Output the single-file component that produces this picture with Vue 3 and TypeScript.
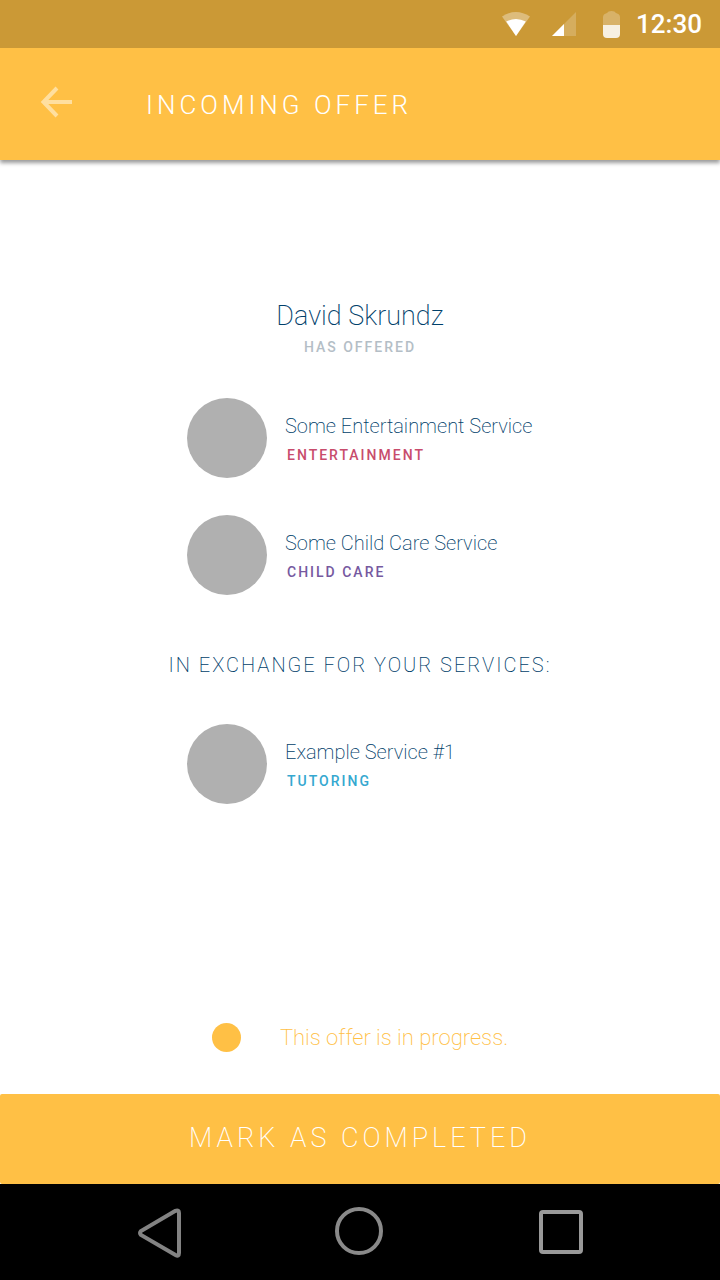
<script setup lang="ts">
interface Service {
  name: string
  category: string
  tone: string
}

const offered: Service[] = [
  { name: 'Some Entertainment Service', category: 'ENTERTAINMENT', tone: 'entertainment' },
  { name: 'Some Child Care Service', category: 'CHILD CARE', tone: 'child-care' },
]

const requested: Service[] = [
  { name: 'Example Service #1', category: 'TUTORING', tone: 'tutoring' },
]
</script>

<template>
  <div class="screen">
    <div class="status-bar">
      <svg class="wifi" width="28" height="24" viewBox="0 0 28 24" aria-hidden="true">
        <path d="M0 4.5Q14-4.5 28 4.5L14 24Z" fill="#fff" fill-opacity=".35" />
        <path d="M4.2 9.500Q14 4.500 23.8 9.500L14 24Z" fill="#fff" />
      </svg>
      <svg class="signal" width="24" height="24" viewBox="0 0 24 24" aria-hidden="true">
        <path d="M24 0V24H0Z" fill="#fff" fill-opacity=".2" />
        <path d="M12 12V24H0Z" fill="#fff" />
      </svg>
      <svg class="battery" width="17" height="27" viewBox="0 0 17 27" aria-hidden="true">
        <path d="M0 14V6Q0 3 4 2Q5 0 8.500 0T13 2Q17 3 17 6V14Z" fill="#fff" fill-opacity=".25" />
        <path d="M0 14H17V23Q17 27 13 27H4Q0 27 0 23Z" fill="#fff" fill-opacity=".85" />
      </svg>
      <time class="clock">12:30</time>
    </div>

    <header class="app-bar">
      <button class="back" type="button" aria-label="Back">
        <svg width="32" height="32" viewBox="0 0 32 32" aria-hidden="true">
          <path d="M17 2L3.500 16L17 30M3.500 16H32" />
        </svg>
      </button>
      <h1>INCOMING OFFER</h1>
    </header>

    <main>
      <h2 class="person">David Skrundz</h2>
      <p class="caption">HAS OFFERED</p>

      <ul class="services">
        <li v-for="service in offered" :key="service.name">
          <span class="avatar"></span>
          <div class="details">
            <span class="name">{{ service.name }}</span>
            <span class="category" :class="service.tone">{{ service.category }}</span>
          </div>
        </li>
      </ul>

      <h3 class="exchange">IN EXCHANGE FOR YOUR SERVICES:</h3>

      <ul class="services">
        <li v-for="service in requested" :key="service.name">
          <span class="avatar"></span>
          <div class="details">
            <span class="name">{{ service.name }}</span>
            <span class="category" :class="service.tone">{{ service.category }}</span>
          </div>
        </li>
      </ul>

      <p class="progress"><span class="dot"></span><span class="progress-text">This offer is in progress.</span></p>
    </main>

    <button class="complete" type="button">MARK AS COMPLETED</button>

    <nav class="system-nav" aria-label="System">
      <button type="button" aria-label="Back">
        <svg width="50" height="52" viewBox="0 0 50 52" aria-hidden="true">
          <path d="M40.500 4.800L6 25Q4 27 6 29L40.500 49Q44 51 44 47V7Q44 3.500 40.500 4.800Z" stroke="#838383" />
        </svg>
      </button>
      <button type="button" aria-label="Home">
        <svg width="50" height="52" viewBox="0 0 50 52" aria-hidden="true">
          <circle cx="24" cy="25" r="22" stroke="#8a8a8a" />
        </svg>
      </button>
      <button type="button" aria-label="Recent apps">
        <svg width="50" height="52" viewBox="0 0 50 52" aria-hidden="true">
          <rect x="6" y="6" width="40" height="40" rx="2" stroke="#999" />
        </svg>
      </button>
    </nav>
  </div>
</template>

<style>
body {
  margin: 0;
}
</style>

<style scoped>
.screen {
  display: flex;
  flex-direction: column;
  min-height: 100vh;
  background: #fff;
  color: #00406a;
  font-family: Roboto, "Liberation Sans", sans-serif;
}

button {
  padding: 0;
  border: 0;
  background: none;
  font-family: inherit;
  cursor: pointer;
}

h1,
h2,
h3,
p,
ul {
  margin: 0;
  padding: 0;
}

svg {
  display: block;
}

.status-bar {
  position: relative;
  z-index: 1;
  display: flex;
  align-items: center;
  justify-content: flex-end;
  height: 48px;
  padding-right: 18px;
  background: #cb9936;
  color: #fff;
}

.signal {
  margin-left: 22px;
}

.battery {
  margin-left: 27px;
}

.clock {
  margin-left: 16px;
  font-size: 26px;
  font-weight: 500;
  line-height: 32px;
}

.app-bar {
  display: flex;
  align-items: center;
  height: 112px;
  padding-left: 40px;
  background: #ffc045;
  box-shadow: 0 3px 4px rgba(0, 0, 0, 0.4);
}

.back {
  margin-bottom: 4px;
}

.back svg {
  fill: none;
  stroke: #ffdf9f;
  stroke-width: 4;
}

h1 {
  margin-left: 74px;
  padding-top: 2px;
  color: #fff;
  font-size: 26px;
  font-weight: 300;
  line-height: 32px;
  letter-spacing: 4px;
}

main {
  display: flex;
  flex: 1;
  flex-direction: column;
  align-items: center;
  padding: 140px 0 40px;
}

.person {
  font-size: 27px;
  font-weight: 200;
  line-height: 32px;
}

.caption {
  margin-top: 5px;
  color: #b4bec6;
  font-size: 14px;
  font-weight: 500;
  line-height: 20px;
  letter-spacing: 2px;
}

.services {
  display: flex;
  flex-direction: column;
  gap: 37px;
  width: 346px;
  margin-top: 41px;
  list-style: none;
}

.services li {
  display: flex;
  align-items: center;
  gap: 18px;
}

.avatar {
  flex: none;
  width: 80px;
  height: 80px;
  border-radius: 50%;
  background: #b0b0b0;
}

.details {
  display: flex;
  flex-direction: column;
  gap: 5px;
  white-space: nowrap;
}

.name {
  font-size: 20px;
  font-weight: 200;
  line-height: 28px;
}

.category {
  padding-left: 2px;
  font-size: 14px;
  font-weight: 500;
  line-height: 20px;
  letter-spacing: 2px;
}

.entertainment {
  color: #c84c6c;
}

.child-care {
  color: #7659a0;
}

.tutoring {
  color: #35a8d0;
}

.exchange {
  margin-top: 56px;
  font-size: 20px;
  font-weight: 200;
  line-height: 28px;
  letter-spacing: 2px;
}

.exchange + .services {
  margin-top: 45px;
}

.progress {
  display: flex;
  align-items: center;
  gap: 39px;
  margin-top: auto;
  color: #ffc045;
  font-size: 22px;
  font-weight: 200;
  line-height: 32px;
}

.progress-text {
  padding-top: 2px;
}

.dot {
  width: 29px;
  height: 29px;
  border-radius: 50%;
  background: #ffc045;
}

.complete {
  height: 90px;
  padding-bottom: 2px;
  border-radius: 2px;
  background: #ffc045;
  color: #fff;
  font-size: 27px;
  font-weight: 200;
  line-height: 32px;
  letter-spacing: 4px;
}

.system-nav {
  display: flex;
  justify-content: space-around;
  align-items: center;
  height: 96px;
  padding: 0 60px;
  background: #000;
}

.system-nav svg {
  fill: none;
  stroke-width: 4;
}
</style>
